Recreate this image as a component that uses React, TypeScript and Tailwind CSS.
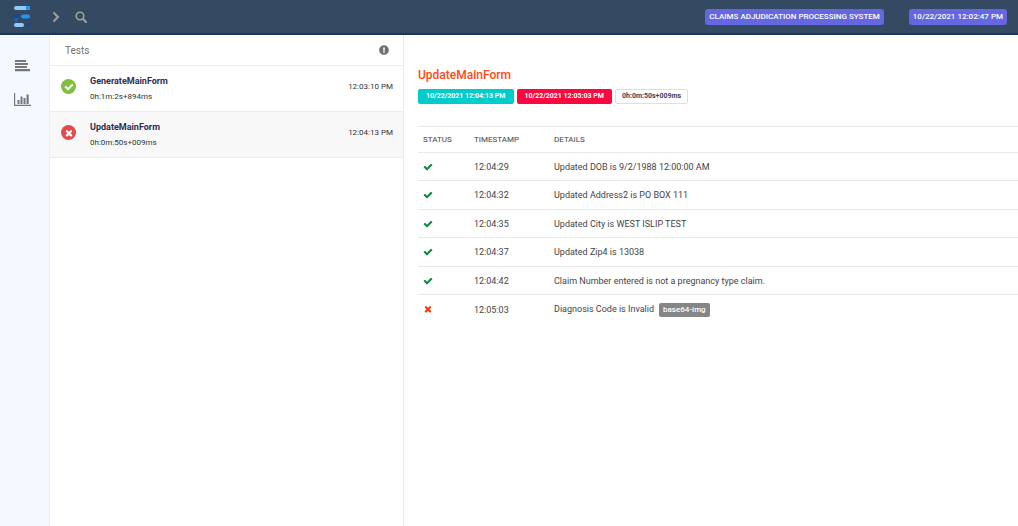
import { FaExclamationCircle } from "react-icons/fa";

interface iTest {
    name: string;
    duration: string;
    time: string;
    passed: boolean;
}

interface iStep {
    passed: boolean;
    time: string;
    details: string;
    attachment?: string;
}

const tests: iTest[] = [
    { name: "GenerateMainForm", duration: "0h:1m:2s+894ms", time: "12:03:10 PM", passed: true },
    { name: "UpdateMainForm", duration: "0h:0m:50s+009ms", time: "12:04:13 PM", passed: false },
];

const steps: iStep[] = [
    { passed: true, time: "12:04:29", details: "Updated DOB is 9/2/1988 12:00:00 AM" },
    { passed: true, time: "12:04:32", details: "Updated Address2 is PO BOX 111" },
    { passed: true, time: "12:04:35", details: "Updated City is WEST ISLIP TEST" },
    { passed: true, time: "12:04:37", details: "Updated Zip4 is 13038" },
    { passed: true, time: "12:04:42", details: "Claim Number entered is not a pregnancy type claim." },
    { passed: false, time: "12:05:03", details: "Diagnosis Code is Invalid", attachment: "base64-img" },
];

const CheckIcon = ({ className }: { className: string }) => (
    <svg viewBox="0 0 1792 1792" fill="currentColor" className={className} aria-label="Pass">
        <path d="M1671 566q0 40-28 68l-724 724-136 136q-28 28-68 28t-68-28l-136-136-362-362q-28-28-28-68t28-68l136-136q28-28 68-28t68 28l294 295 656-657q28-28 68-28t68 28l136 136q28 28 28 68z" />
    </svg>
);

const TimesIcon = ({ className }: { className: string }) => (
    <svg viewBox="0 0 1792 1792" fill="currentColor" className={className} aria-label="Fail">
        <path d="M1490 1322q0 40-28 68l-136 136q-28 28-68 28t-68-28l-294-294-294 294q-28 28-68 28t-68-28l-136-136q-28-28-28-68t28-68l294-294-294-294q-28-28-28-68t28-68l136-136q28-28 68-28t68 28l294 294 294-294q28-28 68-28t68 28l136 136q28 28 28 68t-28 68l-294 294 294 294q28 28 28 68z" />
    </svg>
);

const Logo = () => (
    <svg viewBox="0 0 16 21" className="h-[21px] w-4">
        <rect x="0" y="0" width="16" height="4" rx="2" fill="#90caf9" />
        <path d="M12 0h2a2 2 0 0 1 0 4h-2z" fill="#2196f3" />
        <path d="M2.200 10.500v3.500" stroke="#1565c0" strokeWidth="3.600" strokeLinecap="round" />
        <circle cx="2.200" cy="10.300" r="1.900" fill="#0d47a1" />
        <rect x="7" y="8.500" width="9" height="4" rx="2" fill="#2196f3" />
        <rect x="0" y="17" width="10" height="4" rx="2" fill="#90caf9" />
        <circle cx="14" cy="19" r="1.800" fill="#0d47a1" />
    </svg>
);

const Header = () => (
    <header className="flex h-[35px] items-center border-b-2 border-[#1c355e] bg-[#344a63]">
        <a href="#home" aria-label="Home" className="ml-[14px]">
            <Logo />
        </a>
        <button aria-label="Toggle menu" className="ml-[22px] text-[#a0a09c]">
            <svg viewBox="0 0 8 12" className="h-3 w-2" fill="none" stroke="currentColor" strokeWidth="2">
                <path d="M1.500 1.500L6 6l-4.500 4.500" />
            </svg>
        </button>
        <button aria-label="Search" className="ml-[15px] text-[#a0a09c]">
            <svg viewBox="0 0 12 12" className="size-3" fill="none" stroke="currentColor">
                <circle cx="5" cy="5" r="3.800" strokeWidth="1.600" />
                <path d="M8 8l3 3" strokeWidth="2" strokeLinecap="round" />
            </svg>
        </button>
        <div className="mr-[11px] ml-auto flex gap-[25px] text-[8px] leading-4 font-medium text-white">
            <span className="rounded-[3px] bg-[#6467e0] px-1">CLAIMS ADJUDICATION PROCESSING SYSTEM</span>
            <span className="rounded-[3px] bg-[#6467e0] px-1">10/22/2021 12:02:47 PM</span>
        </div>
    </header>
);

const SideNav = () => (
    <nav className="flex w-[50px] shrink-0 flex-col items-center gap-5 border-r border-[#ebeef2] bg-[#f4f9ff] pt-6 pr-1 text-[#77777a]">
        <a href="#tests" aria-label="Tests">
            <svg viewBox="0 0 15 14" className="h-3.5 w-[15px]" fill="currentColor">
                <path d="M0 1h11v2H0zM0 4h13v2H0zM0 7h12v2H0zM0 10h15v2.200H0z" />
            </svg>
        </a>
        <a href="#dashboard" aria-label="Dashboard">
            <svg viewBox="0 0 17 13" className="h-[13px] w-[17px]" fill="currentColor">
                <path d="M0 0h1.200v11.800H17V13H0zM3.500 7h2v4h-2zM6.500 3.500h2v7.500h-2zM9.500 5h2v6h-2zM12.500 1.500h2.200v9.500h-2.200z" />
            </svg>
        </a>
    </nav>
);

const TestList = () => (
    <section className="w-[354px] shrink-0 border-r border-[#e9e9e9]">
        <div className="flex h-[31px] items-center justify-between border-b border-[#ececec] pr-[14px] pl-[15px] text-[#707070]">
            <h2 className="text-[10px]">Tests</h2>
            <FaExclamationCircle className="size-2.5" />
        </div>
        <ul>
            {tests.map((test) => (
                <li key={test.name} className={`border-b border-[#ececec] ${test.passed ? "bg-white" : "bg-[#f8f8f8]"}`}>
                    <button className="flex w-full items-start pt-[7px] pr-[10px] pb-1.5 pl-[11px] text-left">
                        <span
                            className={`mt-1.5 flex size-[15px] items-center justify-center rounded-full text-white ${test.passed ? "bg-[#7fbf3f]" : "bg-[#e14b4b]"}`}
                        >
                            {test.passed ? <CheckIcon className="size-2.5" /> : <TimesIcon className="size-2.5" />}
                        </span>
                        <span className="ml-[14px] flex flex-col">
                            <span className="text-[9px] leading-4 font-bold text-[#2f2d52]">{test.name}</span>
                            <span className="text-[8px] leading-4 text-[#333]">{test.duration}</span>
                        </span>
                        <span className="mt-1.5 ml-auto text-[8px] leading-4 text-[#333]">{test.time}</span>
                    </button>
                </li>
            ))}
        </ul>
    </section>
);

const TestDetails = () => (
    <main className="min-w-0 flex-1 pt-8 pl-[14px]">
        <h1 className="text-[12px] leading-4 font-medium text-[#ff4a12]">UpdateMainForm</h1>
        <div className="mt-1.5 flex gap-[3px] text-[7px] leading-[15px] font-bold">
            <span className="rounded-[2px] bg-[#00cccc] px-2 text-white">10/22/2021 12:04:13 PM</span>
            <span className="rounded-[2px] bg-[#f9093f] px-2 text-white">10/22/2021 12:05:03 PM</span>
            <span className="rounded-[2px] border border-[#dedfe6] px-1.5 leading-[13px] text-[#3d3d60]">0h:0m:50s+009ms</span>
        </div>
        <table className="mt-[22px] w-full text-left text-[#444]">
            <thead>
                <tr className="h-[26px] border-y border-[#e9e9e9] text-[8px]">
                    <th className="w-[51px] pl-[5px] font-normal">STATUS</th>
                    <th className="w-20 pl-[5px] font-normal">TIMESTAMP</th>
                    <th className="pl-[5px] font-normal">DETAILS</th>
                </tr>
            </thead>
            <tbody className="text-[9px]">
                {steps.map((step) => (
                    <tr key={step.time} className="h-7 border-b border-[#e9e9e9] last:border-b-0 even:h-[29px]">
                        <td className="pl-[5px]">
                            {step.passed ? (
                                <CheckIcon className="size-2.5 text-[#078a43]" />
                            ) : (
                                <TimesIcon className="size-2.5 text-[#fa3a0a]" />
                            )}
                        </td>
                        <td className="pt-0.5 pl-[5px]">{step.time}</td>
                        <td className="pt-0.5 pl-[5px]">
                            {step.details}
                            {step.attachment && (
                                <a
                                    href="#attachment"
                                    className="ml-[5px] inline-block rounded-[2px] bg-[#868686] px-1 text-[8px] leading-[14px] font-medium text-white"
                                >
                                    {step.attachment}
                                </a>
                            )}
                        </td>
                    </tr>
                ))}
            </tbody>
        </table>
    </main>
);

const App = () => {
    return (
        <div className="flex min-h-screen flex-col bg-white font-[Roboto,sans-serif]">
            <Header />
            <div className="flex flex-1">
                <SideNav />
                <TestList />
                <TestDetails />
            </div>
        </div>
    );
};

export default App;
